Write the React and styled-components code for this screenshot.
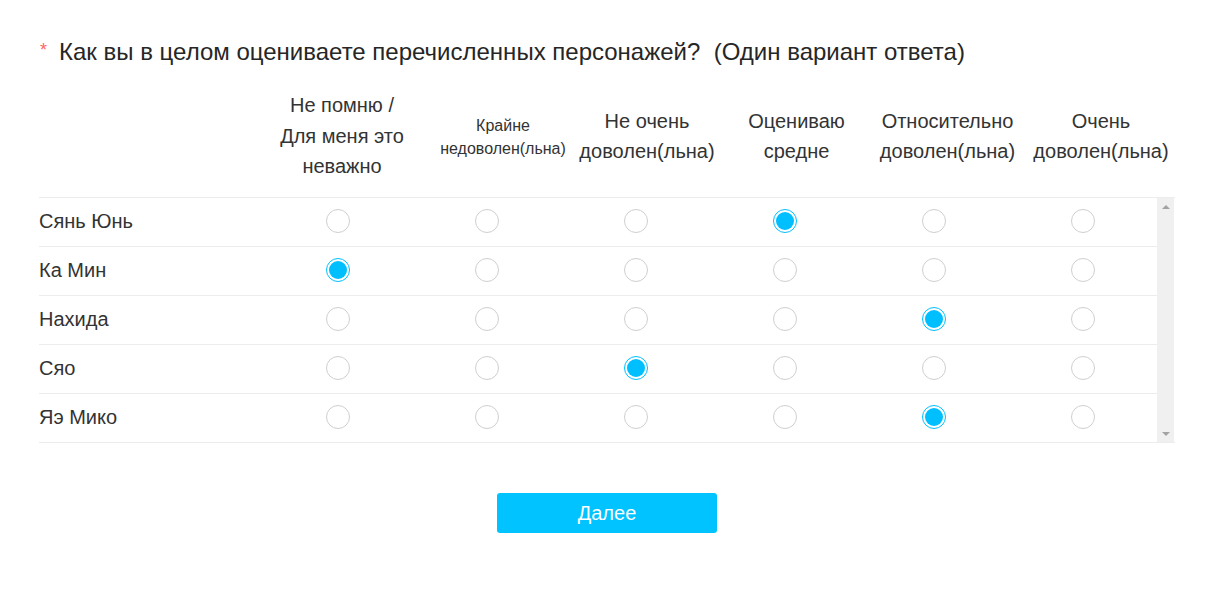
import React, { useState } from "react";
import styled, { createGlobalStyle } from "styled-components";

const GlobalStyle = createGlobalStyle`
    body {
        margin: 0;
        background: #fff;
        font-family: "Liberation Sans", Arial, sans-serif;
        color: #333;
    }
`;

const COLS = [
    ["Не помню /", "Для меня это", "неважно"],
    ["Крайне", "недоволен(льна)"],
    ["Не очень", "доволен(льна)"],
    ["Оцениваю", "средне"],
    ["Относительно", "доволен(льна)"],
    ["Очень", "доволен(льна)"],
];

const ROWS = [
    { name: "Сянь Юнь", value: 3 },
    { name: "Ка Мин", value: 0 },
    { name: "Нахида", value: 4 },
    { name: "Сяо", value: 2 },
    { name: "Яэ Мико", value: 4 },
];

const HEAD_GRID = "208px 190px 132px 156px 143px 159px 148px";
const BODY_GRID = "224px repeat(6, 149px)";

const Page = styled.div`
    padding: 37px 0 0 39px;
    width: 1136px;
`;

const Title = styled.div`
    display: flex;
    align-items: center;
    font-size: 24px;
    line-height: 30px;
    color: #262626;
    white-space: pre;
`;

const Star = styled.span`
    color: #f66;
    font-size: 18px;
    margin: 0 12px 0 1px;
    position: relative;
    top: -2px;
`;

const HeadRow = styled.div`
    display: grid;
    grid-template-columns: ${HEAD_GRID};
    height: 112px;
    margin-top: 18px;
    border-bottom: 1px solid #ececec;
`;

const HeadCell = styled.div`
    display: flex;
    flex-direction: column;
    align-items: center;
    justify-content: center;
    text-align: center;
    font-size: ${(p) => (p.$small ? "16px" : "20px")};
    line-height: ${(p) => (p.$small ? "23px" : "30.5px")};
    color: #333;
    white-space: nowrap;
    padding-bottom: ${(p) => (p.$small ? "0" : "10px")};
    transform: ${(p) => (p.$small ? "translateY(-4px)" : "none")};
`;

const Body = styled.div`
    display: flex;
    border-bottom: 1px solid #ececec;
`;

const Rows = styled.div`
    width: 1118px;
`;

const Row = styled.div`
    display: grid;
    grid-template-columns: ${BODY_GRID};
    height: 48px;
    align-items: center;
    & + & {
        border-top: 1px solid #ececec;
    }
`;

const Label = styled.div`
    font-size: 20px;
    color: #333;
    padding-bottom: 1px;
`;

const Cell = styled.div`
    display: flex;
    justify-content: center;
    padding-bottom: 3px;
`;

const Radio = styled.span`
    box-sizing: border-box;
    width: 24px;
    height: 24px;
    border-radius: 50%;
    border: 1px solid ${(p) => (p.$on ? "#00bfff" : "#cfcfcf")};
    padding: 2px;
    background: ${(p) => (p.$on ? "#00bfff" : "#fff")};
    background-clip: content-box;
    cursor: pointer;
`;

const Scrollbar = styled.div`
    width: 17px;
    background: #f0f0f0;
    display: flex;
    flex-direction: column;
    justify-content: space-between;
    align-items: center;
    padding: 7px 0 6px;
`;

const Arrow = styled.span`
    width: 0;
    height: 0;
    border-left: 4px solid transparent;
    border-right: 4px solid transparent;
    ${(p) =>
        p.$down
            ? "border-top: 4px solid #a3a3a3;"
            : "border-bottom: 4px solid #a3a3a3;"}
`;

const Footer = styled.div`
    display: flex;
    justify-content: center;
    padding-top: 50px;
    width: 1136px;
`;

const NextButton = styled.button`
    width: 220px;
    height: 40px;
    border: none;
    border-radius: 3px;
    background: #00c3ff;
    color: #fff;
    font-family: "Liberation Sans", Arial, sans-serif;
    font-size: 20px;
    cursor: pointer;
`;

export default function App() {
    const [values, setValues] = useState(ROWS.map((r) => r.value));

    return (
        <Page>
            <GlobalStyle />
            <Title>
                <Star>*</Star>
                Как вы в целом оцениваете перечисленных персонажей?  (Один вариант ответа)
            </Title>
            <HeadRow>
                <div />
                {COLS.map((lines, i) => (
                    <HeadCell key={i} $small={i === 1}>
                        {lines.map((l) => (
                            <span key={l}>{l}</span>
                        ))}
                    </HeadCell>
                ))}
            </HeadRow>
            <Body>
                <Rows>
                    {ROWS.map((row, r) => (
                        <Row key={row.name}>
                            <Label>{row.name}</Label>
                            {COLS.map((_, c) => (
                                <Cell key={c}>
                                    <Radio
                                        $on={values[r] === c}
                                        onClick={() =>
                                            setValues((v) =>
                                                v.map((x, k) => (k === r ? c : x))
                                            )
                                        }
                                    />
                                </Cell>
                            ))}
                        </Row>
                    ))}
                </Rows>
                <Scrollbar>
                    <Arrow />
                    <Arrow $down />
                </Scrollbar>
            </Body>
            <Footer>
                <NextButton>Далее</NextButton>
            </Footer>
        </Page>
    );
}
